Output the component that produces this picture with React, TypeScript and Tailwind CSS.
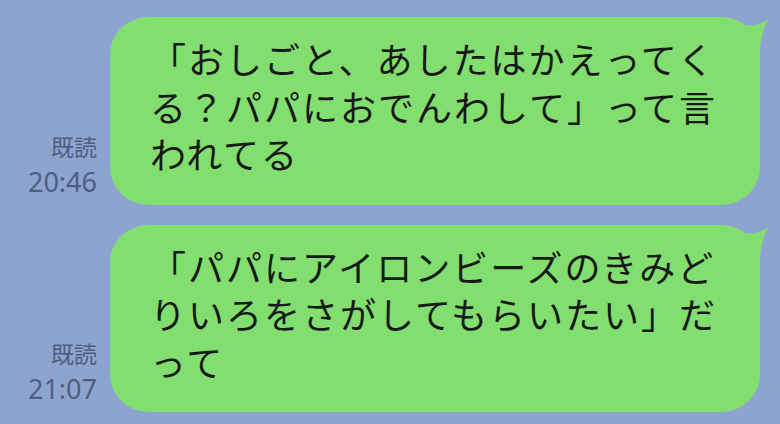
import React from 'react';

type Message = {
  lines: string[];
  time: string;
};

const messages: Message[] = [
  {
    lines: ['「おしごと、あしたはかえってく', 'る？パパにおでんわして」って言', 'われてる'],
    time: '20:46',
  },
  {
    lines: ['「パパにアイロンビーズのきみど', 'りいろをさがしてもらいたい」だ', 'って'],
    time: '21:07',
  },
];

function Tail() {
  // the little horn on the bubble's top-right corner
  return (
    <svg
      className="absolute right-[-12px] top-0"
      width="40"
      height="40"
      viewBox="0 0 40 40"
    >
      <path d="M11 8 Q26 10 37 2 Q29 14 28 34 L12 34 Z" fill="#82df6f" />
    </svg>
  );
}

function Bubble({ lines, time }: Message) {
  return (
    <div className="flex items-end gap-[13px]">
      <div className="flex-1 text-right mb-[5px] text-[#4d5e80]">
        <div
          className="text-[23px] leading-[34px]"
          style={{ fontFamily: '"Noto Sans CJK JP", sans-serif' }}
        >
          既読
        </div>
        <div
          className="text-[27px] leading-[37px]"
          style={{ fontFamily: '"Noto Sans", sans-serif' }}
        >
          {time}
        </div>
      </div>
      <div className="relative w-[650px] rounded-[38px] bg-[#82df6f] pl-[40px] pt-[18px] pb-[27px]">
        <Tail />
        <div
          className="text-[36px] leading-[47.5px] tracking-[2px] text-[#161a16]"
          style={{ fontFamily: '"Noto Sans CJK JP", sans-serif' }}
        >
          {lines.map((line, i) => (
            <div key={i} className="whitespace-nowrap">
              {line}
            </div>
          ))}
        </div>
      </div>
    </div>
  );
}

export default function App() {
  return (
    <div className="w-[780px] h-[424px] overflow-hidden bg-[#8ea4d0] pt-[17px] pr-[20px]">
      <div className="flex flex-col gap-[20px]">
        {messages.map((m) => (
          <Bubble key={m.time} {...m} />
        ))}
      </div>
    </div>
  );
}
